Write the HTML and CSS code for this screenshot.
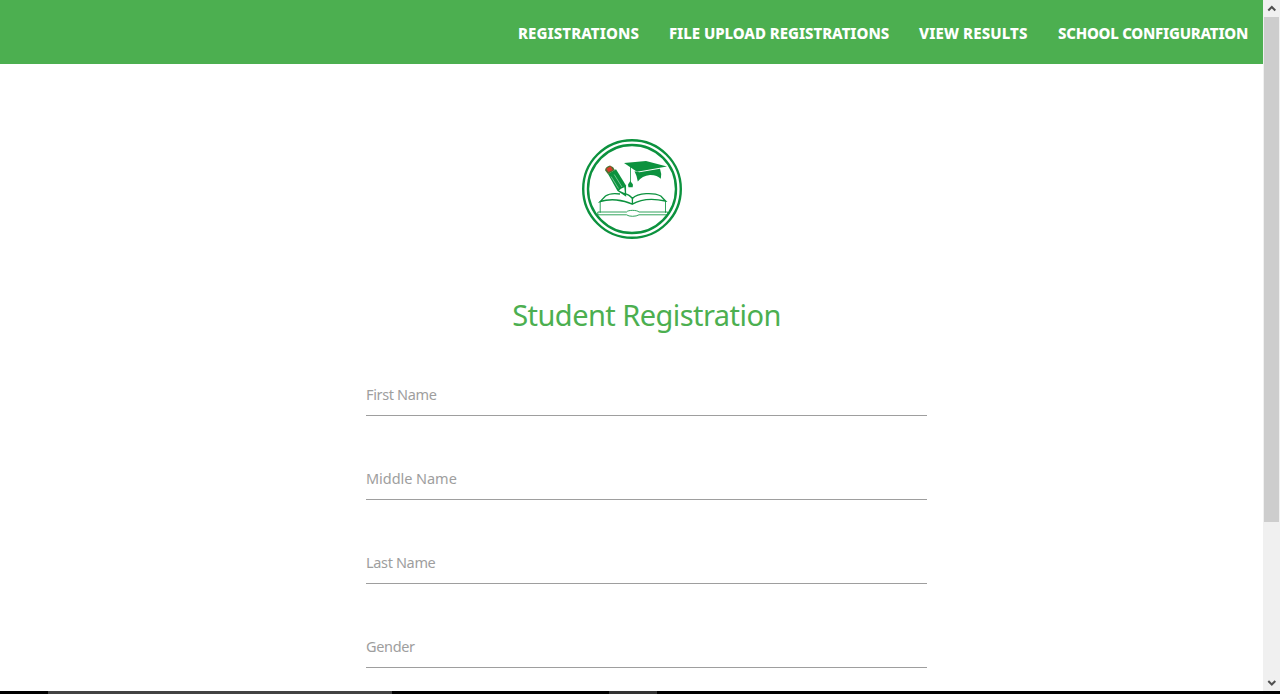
FILE: index.html
```html
<!DOCTYPE html>
<html lang="en">
<head>
<meta charset="utf-8">
<title>Student Registration</title>
<link rel="stylesheet" href="styles.css">
</head>
<body>
<div class="window">
  <div class="page">
    <nav class="nav">
      <a class="nav-link registrations">REGISTRATIONS</a>
      <a class="nav-link upload">FILE UPLOAD REGISTRATIONS</a>
      <a class="nav-link results">VIEW RESULTS</a>
      <a class="nav-link school">SCHOOL CONFIGURATION</a>
    </nav>
    <main class="main">
      <svg class="logo" viewBox="0 0 100 100" fill="none" stroke="#0c923e">
        <circle cx="50" cy="50" r="48.8" stroke-width="2.4"/>
        <circle cx="50" cy="50" r="44" stroke-width="2.4"/>
        <!-- graduation cap -->
        <path d="M42 24 64 22 85 27.6 55 32.8Z" fill="#0c923e" stroke="none"/>
        <path d="M52.5 32.3 57.5 33.2 78 29.8Q80 35 78.8 39.8 75 35.8 68 36 60 36.6 55.8 42.5 55 37 52.5 32.3Z" fill="#0c923e" stroke="none"/>
        <path d="M48.5 28V43" stroke-width=".8"/>
        <path d="M48.3 42 46 45.5 46.5 48.3H50.7L51 45.5Z" fill="#0c923e" stroke="none"/>
        <!-- pencil -->
        <path d="M26 35 34 30.2 44 46.5 44.2 57.8 35.5 52Z" fill="#0c923e" stroke="none"/>
        <path d="M23 31.2Q23.5 27.5 28 26.5L31.2 28.2 32.8 31 26 35.2Z" fill="#4b7130" stroke="none"/>
        <path d="M24.2 29.8 28.6 27.3 30.8 31 26.4 33Z" fill="#d83a2b" stroke="none"/>
        <path d="M29 37.5 36.5 49.5M32.2 35.5 40 48" stroke="#d9efe0" stroke-width=".5"/>
        <path d="M37 51.5 39 49.8 42.3 48.2 42.9 54.2Z" fill="#fff" stroke="none"/>
        <!-- open book -->
        <path d="M38 55C31 54 27 54.5 23.5 57L18.2 62.5C28 59.5 41 60.5 50.3 65.2 59 60 72 59.5 83.5 62L78.8 57C72 53.5 56 53.5 50.4 59.5 48 56.5 45 55 42 54.5M50.4 59.5V65" stroke-width="1.35"/>
        <path d="M18.2 62V73.8M83.5 62V73.8M15.8 73H44.5C46 70.8 55 70.8 57 73H85.7M15.8 75.8H44.5C47 77.8 54 77.8 57 75.8H85.7M15.8 73V75.8M85.7 73V75.8" stroke-width=".85"/>
      </svg>
      <form class="form">
        <h1 class="title">Student Registration</h1>
        <div class="field"><label class="label">First Name</label></div>
        <div class="field"><label class="label middle">Middle Name</label></div>
        <div class="field"><label class="label">Last Name</label></div>
        <div class="field"><label class="label">Gender</label></div>
      </form>
    </main>
  </div>
  <div class="scrollbar">
    <svg class="arrow" viewBox="0 0 16 17"><path d="M4.3 10.5 7.8 7 11.3 10.5" fill="none" stroke="#505050" stroke-width="2"/></svg>
    <div class="thumb"></div>
    <svg class="arrow" viewBox="0 0 16 17"><path d="M4.3 7 7.8 10.5 11.3 7" fill="none" stroke="#505050" stroke-width="2"/></svg>
  </div>
</div>
<div class="taskbar"><div class="task search"></div><div class="task active"></div></div>
</body>
</html>
```
FILE: styles.css
```css
* { box-sizing: border-box; }
body {
  margin: 0;
  height: 694px;
  overflow: hidden;
  background: #fff;
  font-family: "Noto Sans", "Open Sans", sans-serif;
}
.window { display: flex; height: 691px; }
.page { width: 1263px; height: 691px; overflow: hidden; }
.nav {
  display: flex;
  justify-content: flex-end;
  gap: 30px;
  height: 64px;
  padding-right: 15px;
  background: #4caf50;
}
.nav-link {
  color: #fff;
  font-size: 15px;
  font-weight: 800;
  line-height: 67px;
  white-space: nowrap;
}
.registrations { width: 121px; letter-spacing: 0.08px; }
.upload { width: 220px; letter-spacing: -0.04px; }
.results { width: 109px; letter-spacing: 0.13px; }
.school { width: 190px; letter-spacing: -0.24px; }
.main { display: flex; flex-direction: column; align-items: center; padding-top: 75px; }
.logo { display: block; width: 100px; height: 100px; }
.form { width: 561px; margin: 55px 0 0 30px; }
.title {
  margin: 0;
  color: #4caf50;
  font-size: 29px;
  font-weight: 400;
  letter-spacing: -0.55px;
  line-height: 41px;
  text-align: center;
}
.field {
  height: 46px;
  margin-bottom: 38px;
  border-bottom: 1px solid #9e9e9e;
}
.title + .field { margin-top: 35px; }
.label {
  display: block;
  color: #9e9e9e;
  font-size: 14.5px;
  letter-spacing: -0.35px;
  line-height: 48px;
}
.middle { letter-spacing: -0.05px; }
.scrollbar {
  display: flex;
  flex-direction: column;
  width: 17px;
  height: 691px;
  padding-left: 1px;
  background: #f0f0f0;
}
.arrow { width: 16px; height: 17px; }
.thumb { width: 15px; height: 505px; margin-bottom: 152px; background: #cdcdcd; flex: none; }
.taskbar { display: flex; height: 3px; background: #000; }
.task { height: 3px; }
.search { width: 344px; margin-left: 48px; background: #424242; }
.active { width: 48px; margin-left: 217px; background: #333; }
```
